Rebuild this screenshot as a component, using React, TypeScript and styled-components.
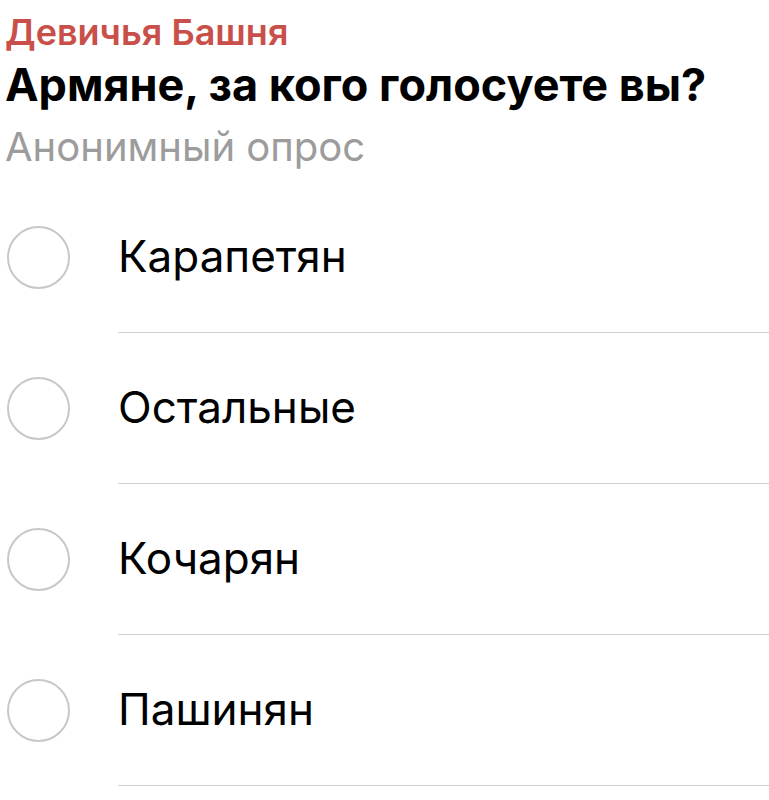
import React from 'react';
import styled, { createGlobalStyle } from 'styled-components';

const GlobalStyle = createGlobalStyle`
  body {
    margin: 0;
    background: #ffffff;
    font-family: Inter, "Liberation Sans", Arial, sans-serif;
  }
`;

const Poll = styled.div`
  width: 769px;
  display: flex;
  flex-direction: column;
`;

const Header = styled.div`
  display: flex;
  flex-direction: column;
  padding: 10px 0 0 5px;
`;

const Channel = styled.div`
  color: #c9504a;
  font-size: 36px;
  font-weight: 600;
  line-height: 44px;
`;

const Question = styled.div`
  color: #000000;
  font-size: 45px;
  font-weight: 700;
  line-height: 54px;
  margin-top: 4px;
`;

const Kind = styled.div`
  color: #9c9c9c;
  font-size: 40px;
  line-height: 48px;
  margin-top: 11px;
`;

const Options = styled.div`
  display: flex;
  flex-direction: column;
  margin-top: 11px;
`;

const Option = styled.div`
  display: flex;
  align-items: stretch;
  height: 151px;
`;

const RadioCell = styled.div`
  width: 118px;
  display: flex;
  align-items: center;
  padding-left: 7px;
  box-sizing: border-box;
`;

const Radio = styled.div`
  width: 63px;
  height: 63px;
  border-radius: 50%;
  border: 2.5px solid #c8c8c8;
  box-sizing: border-box;
`;

const Label = styled.div`
  flex: 1;
  display: flex;
  align-items: center;
  font-size: 44px;
  color: #000000;
  padding-bottom: 3px;
  border-bottom: 1.5px solid #d0d0d0;
`;

const options = ['Карапетян', 'Остальные', 'Кочарян', 'Пашинян'];

export default function App() {
  return (
    <Poll>
      <GlobalStyle />
      <Header>
        <Channel>Девичья Башня</Channel>
        <Question>Армяне, за кого голосуете вы?</Question>
        <Kind>Анонимный опрос</Kind>
      </Header>
      <Options>
        {options.map((o) => (
          <Option key={o}>
            <RadioCell>
              <Radio />
            </RadioCell>
            <Label>{o}</Label>
          </Option>
        ))}
      </Options>
    </Poll>
  );
}
